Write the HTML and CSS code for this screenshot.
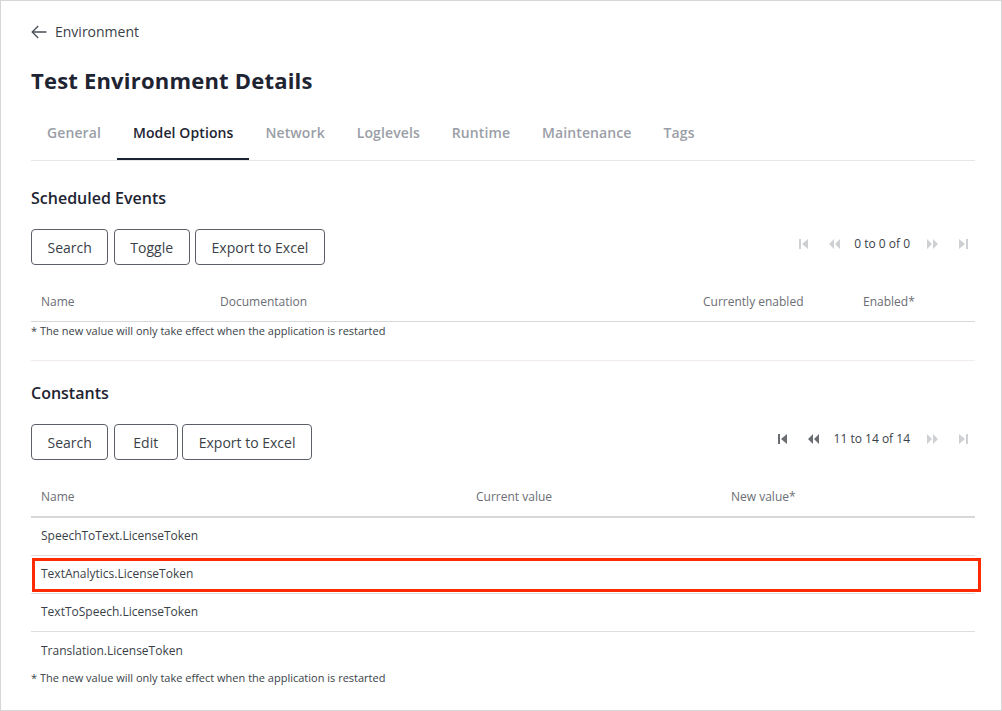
FILE: index.html
```html
<!DOCTYPE html>
<html lang="en">
<head>
<meta charset="utf-8">
<title>Test Environment Details</title>
<link rel="stylesheet" href="styles.css">
</head>
<body>
<div class="page">
  <a class="back" href="#">
    <svg class="back-icon" width="16" height="14" viewBox="0 0 16 14" aria-hidden="true"><path d="M15.5 7H1.2M7.2 1L1.2 7l6 6" fill="none" stroke="#4a4f58" stroke-width="1.3"/></svg>
    <span>Environment</span>
  </a>
  <h1 class="title">Test Environment Details</h1>
  <nav class="tabs">
    <span class="tab">General</span>
    <span class="tab active">Model Options</span>
    <span class="tab">Network</span>
    <span class="tab">Loglevels</span>
    <span class="tab">Runtime</span>
    <span class="tab">Maintenance</span>
    <span class="tab">Tags</span>
  </nav>

  <section class="section">
    <h2 class="heading">Scheduled Events</h2>
    <div class="toolbar">
      <div class="buttons">
        <button class="btn">Search</button>
        <button class="btn">Toggle</button>
        <button class="btn">Export to Excel</button>
      </div>
      <div class="pager">
        <span class="pg off"><svg width="9" height="10" viewBox="0 0 9 10"><rect x="0" y="0" width="2" height="10"/><path d="M9 0L3 5l6 5z"/></svg></span>
        <span class="pg off"><svg width="11" height="10" viewBox="0 0 11 10"><path d="M5 0L0 5l5 5z M11 0L6 5l5 5z"/></svg></span>
        <span class="pg-text">0 to 0 of 0</span>
        <span class="pg off"><svg width="11" height="10" viewBox="0 0 11 10"><path d="M0 0l5 5-5 5z M6 0l5 5-5 5z"/></svg></span>
        <span class="pg off"><svg width="9" height="10" viewBox="0 0 9 10"><path d="M0 0l6 5-6 5z"/><rect x="7" y="0" width="2" height="10"/></svg></span>
      </div>
    </div>
    <div class="grid grid-events head thin">
      <span>Name</span><span>Documentation</span><span>Currently enabled</span><span>Enabled*</span>
    </div>
    <p class="note note-first">* The new value will only take effect when the application is restarted</p>
  </section>

  <hr class="sep">

  <section class="section">
    <h2 class="heading heading-const">Constants</h2>
    <div class="toolbar">
      <div class="buttons">
        <button class="btn">Search</button>
        <button class="btn btn-edit">Edit</button>
        <button class="btn">Export to Excel</button>
      </div>
      <div class="pager">
        <span class="pg on"><svg width="9" height="10" viewBox="0 0 9 10"><rect x="0" y="0" width="2" height="10"/><path d="M9 0L3 5l6 5z"/></svg></span>
        <span class="pg on"><svg width="11" height="10" viewBox="0 0 11 10"><path d="M5 0L0 5l5 5z M11 0L6 5l5 5z"/></svg></span>
        <span class="pg-text">11 to 14 of 14</span>
        <span class="pg off"><svg width="11" height="10" viewBox="0 0 11 10"><path d="M0 0l5 5-5 5z M6 0l5 5-5 5z"/></svg></span>
        <span class="pg off"><svg width="9" height="10" viewBox="0 0 9 10"><path d="M0 0l6 5-6 5z"/><rect x="7" y="0" width="2" height="10"/></svg></span>
      </div>
    </div>
    <div class="table">
      <div class="grid grid-const head thick">
        <span>Name</span><span>Current value</span><span>New value*</span>
      </div>
      <div class="grid grid-const row"><span>SpeechToText.LicenseToken</span><span></span><span></span></div>
      <div class="grid grid-const row highlighted"><span>TextAnalytics.LicenseToken</span><span></span><span></span></div>
      <div class="grid grid-const row"><span>TextToSpeech.LicenseToken</span><span></span><span></span></div>
      <div class="grid grid-const row last"><span>Translation.LicenseToken</span><span></span><span></span></div>
    </div>
    <p class="note">* The new value will only take effect when the application is restarted</p>
  </section>
</div>
</body>
</html>
```

FILE: styles.css
```css
* { box-sizing: border-box; }
html, body { margin: 0; padding: 0; background: #fff; }
body {
  font-family: "Open Sans", "Noto Sans", "Liberation Sans", sans-serif;
  color: #2f343c;
}
.page {
  width: 1002px;
  height: 711px;
  border: 1px solid #d6d6d6;
  padding: 21px 26px 0 30px;
  overflow: hidden;
}
.back {
  display: flex;
  align-items: center;
  gap: 8px;
  height: 20px;
  font-size: 14px;
  line-height: 20px;
  color: #3a3f48;
  text-decoration: none;
}
.back-icon { display: block; }
.title {
  margin: 23px 0 0;
  font-size: 22px;
  line-height: 30px;
  font-weight: 700;
  color: #1e2432;
  letter-spacing: 0.2px;
}
.tabs {
  display: flex;
  margin-top: 17px;
  border-bottom: 1px solid #e6e7ea;
}
.tab {
  padding: 11px 16px 15px;
  font-size: 14px;
  line-height: 20px;
  font-weight: 600;
  color: #9a9ea6;
  letter-spacing: 0.1px;
  border-bottom: 2px solid transparent;
}
.tab.active {
  color: #1e2432;
  border-bottom-color: #1b2233;
}
.section { position: relative; }
.heading {
  margin: 25px 0 0;
  font-size: 16px;
  line-height: 24px;
  font-weight: 600;
  color: #1e2432;
}
.heading-const { margin-top: 20px; }
.toolbar {
  display: flex;
  justify-content: space-between;
  align-items: flex-start;
  margin-top: 19px;
}
.buttons { display: flex; gap: 5.5px; }
.btn {
  height: 36px;
  padding: 0 15.5px;
  background: #fff;
  border: 1px solid #5a5f68;
  border-radius: 4px;
  font-family: inherit;
  font-size: 14px;
  color: #3a3f48;
  cursor: pointer;
}
.btn-edit { padding: 0 18.5px; margin-right: -1px; }
.pager {
  display: flex;
  align-items: center;
  gap: 7px;
  padding-top: 7px;
}
.pg {
  width: 24px;
  height: 16px;
  display: flex;
  align-items: center;
  justify-content: center;
}
.pg svg { display: block; }
.pg.off svg { fill: #cfd0d3; }
.pg.on svg { fill: #6a6d72; }
.pg-text {
  font-size: 12px;
  line-height: 16px;
  color: #3a3f48;
  padding: 0 3px 0 1px;
}
.grid {
  display: grid;
  align-items: center;
  font-size: 12px;
}
.grid > span { padding-left: 10px; }
.grid-events { grid-template-columns: 179px 483px 160px 1fr; }
.grid-const { grid-template-columns: 435px 255px 1fr; }
.head {
  margin-top: 15px;
  height: 40px;
  color: #6b6e74;
}
.head.thin { border-bottom: 1px solid #d8d8d8; height: 41px; margin-top: 16px; }
.head.thick { border-bottom: 2px solid #d8d8d8; height: 42px; margin-top: 16px; }
.table { position: relative; }
.row {
  height: 38px;
  border-bottom: 1px solid #dedede;
  color: #3a3f48;
  font-size: 12px;
  padding-bottom: 2px;
}
.row.last { border-bottom: none; }
.row.highlighted { position: relative; }
.row.highlighted::after {
  content: "";
  position: absolute;
  left: 1px;
  right: -6px;
  top: 2px;
  bottom: 1px;
  border: 3px solid #ff2a00;
  pointer-events: none;
}
.note {
  margin: 0;
  font-size: 11px;
  line-height: 16px;
  color: #3a3f48;
}
.note-first { padding-top: 1px; }
.sep {
  margin: 21px 0 0;
  border: none;
  border-top: 1px solid #f1eaee;
  height: 0;
}
```
